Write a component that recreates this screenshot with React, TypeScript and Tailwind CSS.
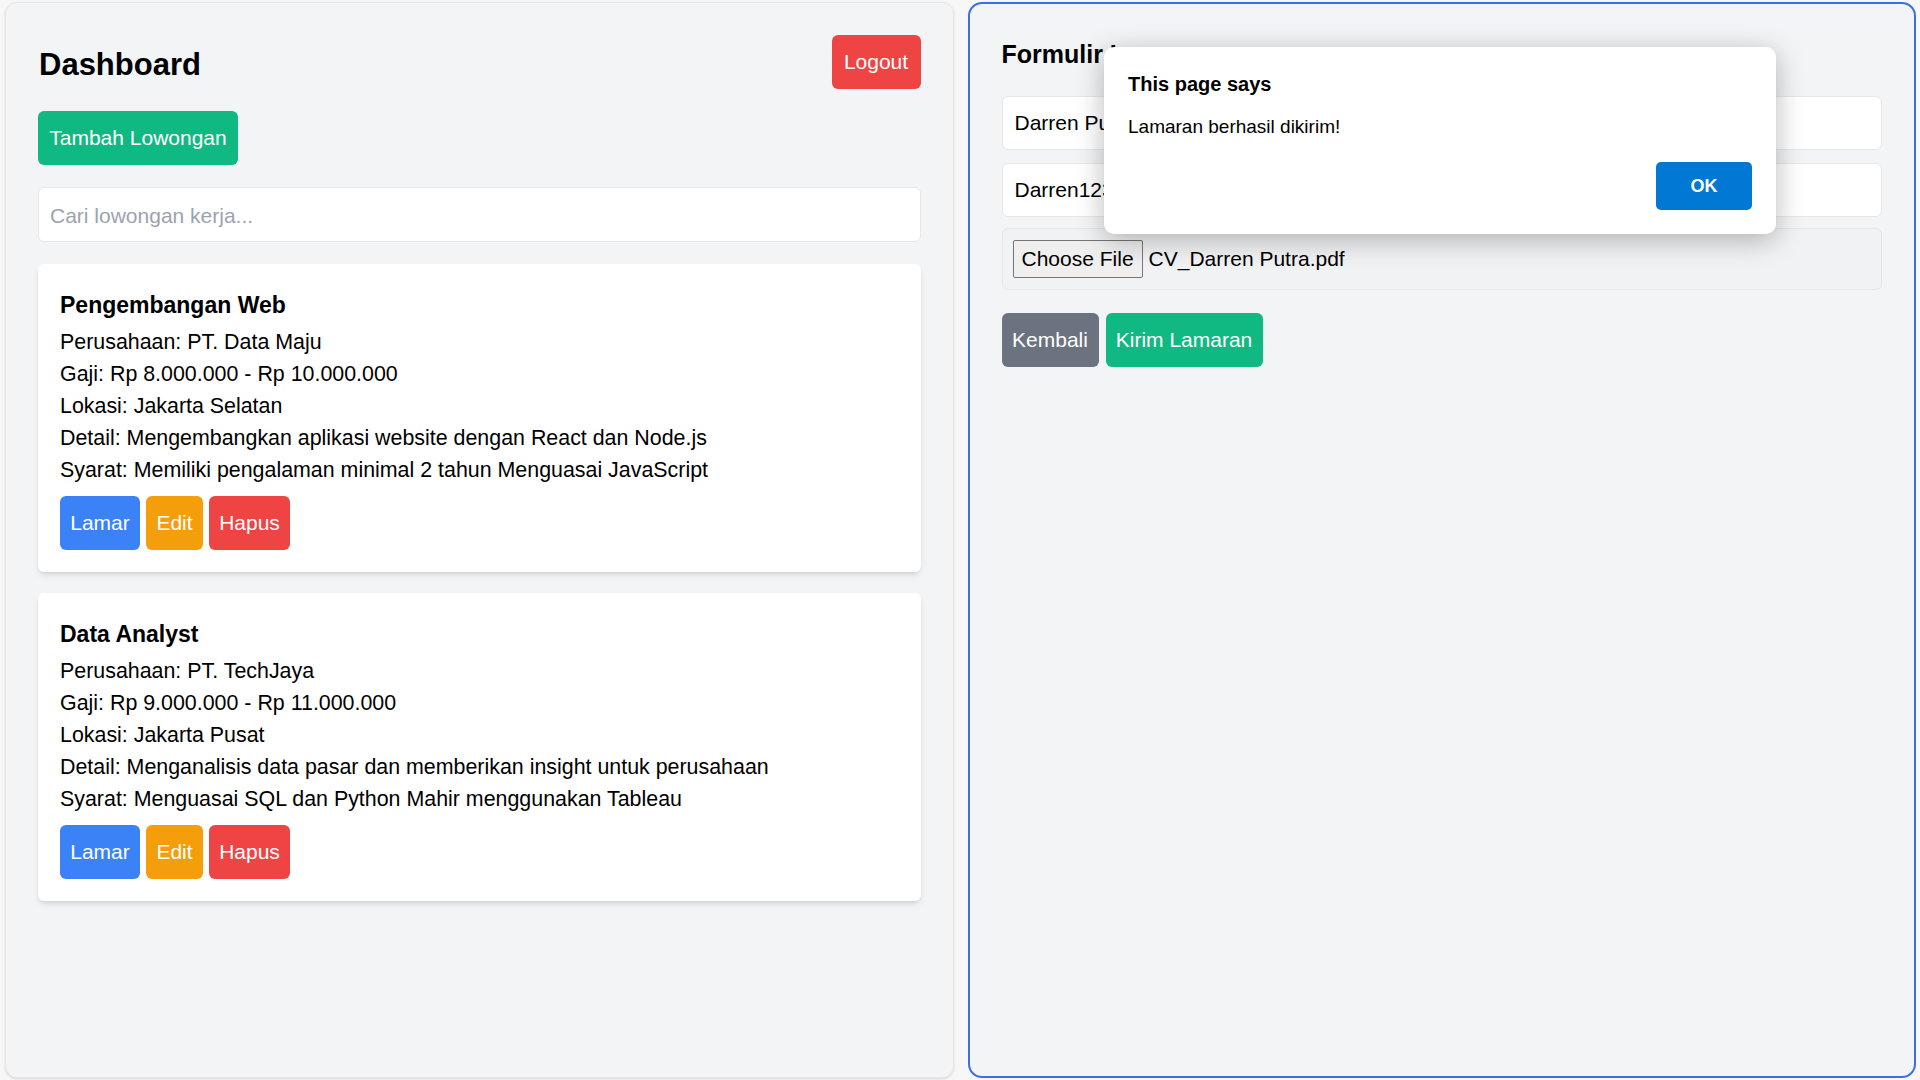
import { useState } from 'react';

type Job = {
  id: number;
  title: string;
  company: string;
  salary: string;
  location: string;
  detail: string;
  terms: string;
};

const jobs: Job[] = [
  {
    id: 1,
    title: 'Pengembangan Web',
    company: 'PT. Data Maju',
    salary: 'Rp 8.000.000 - Rp 10.000.000',
    location: 'Jakarta Selatan',
    detail: 'Mengembangkan aplikasi website dengan React dan Node.js',
    terms: 'Memiliki pengalaman minimal 2 tahun Menguasai JavaScript'
  },
  {
    id: 2,
    title: 'Data Analyst',
    company: 'PT. TechJaya',
    salary: 'Rp 9.000.000 - Rp 11.000.000',
    location: 'Jakarta Pusat',
    detail: 'Menganalisis data pasar dan memberikan insight untuk perusahaan',
    terms: 'Menguasai SQL dan Python Mahir menggunakan Tableau'
  }
];

function JobCard({ job }: { job: Job }) {
  return (
    <div className="bg-white rounded-md shadow-md pl-[22px] pr-5 pt-5 pb-[22px]">
      <h2 className="text-[23px] leading-[42px] font-semibold">{job.title}</h2>
      <div className="text-[21.4px] leading-[32px]">
        <p>Perusahaan: {job.company}</p>
        <p>Gaji: {job.salary}</p>
        <p>Lokasi: {job.location}</p>
        <p>Detail: {job.detail}</p>
        <p>Syarat: {job.terms}</p>
      </div>
      <div className="mt-[10px] flex gap-[6px]">
        <button className="h-[54px] w-[80px] rounded-md bg-[#3b82f6] text-white text-[21px]">Lamar</button>
        <button className="h-[54px] w-[57px] rounded-md bg-[#f59e0b] text-white text-[21px]">Edit</button>
        <button className="h-[54px] w-[81px] rounded-md bg-[#ef4444] text-white text-[21px]">Hapus</button>
      </div>
    </div>
  );
}

export default function App() {
  const [search, setSearch] = useState('');
  const [showAlert, setShowAlert] = useState(true);
  const filtered = jobs.filter(j => j.title.toLowerCase().includes(search.toLowerCase()));

  return (
    <div className="relative h-screen bg-[#f7f7f8] pl-[5px] pr-[4px] py-[2px] grid grid-cols-2 gap-[14px] text-black font-['Liberation_Sans',Arial,sans-serif]">
      {/* dashboard */}
      <div className="bg-[#f3f4f6] border border-[#e6e7ea] rounded-xl shadow-sm p-8 flex flex-col">
        <div className="h-[54px] flex items-center justify-between mb-[22px]">
          <h1 className="text-[31px] leading-[36px] font-bold pt-[6px] pl-[1px]">Dashboard</h1>
          <button className="h-[54px] w-[89px] rounded-md bg-[#ef4444] text-white text-[21px]">Logout</button>
        </div>
        <div className="mb-[22px]">
          <button className="h-[54px] w-[200px] rounded-md bg-[#10b981] text-white text-[21px]">Tambah Lowongan</button>
        </div>
        <input
          value={search}
          onChange={e => setSearch(e.target.value)}
          placeholder="Cari lowongan kerja..."
          className="h-[55px] w-full rounded-md border border-[#e5e7eb] bg-white pl-[11px] pr-3 pt-[3px] text-[21px] placeholder:text-[#9ca3af] outline-none mb-[22px]"
        />
        <div className="flex flex-col gap-[21px]">
          {filtered.map(j => (
            <JobCard key={j.id} job={j} />
          ))}
        </div>
      </div>

      {/* form */}
      <div className="bg-[#f3f4f6] border-2 border-[#3b6ee0] rounded-[14px] p-8">
        <h2 className="text-[25px] leading-[37px] font-bold mb-[23px]">Formulir Lamaran</h2>
        <input
          defaultValue="Darren Putra"
          className="h-[54px] w-full rounded-md border border-[#e5e7eb] bg-white px-3 text-[21px] outline-none mb-[13px]"
        />
        <input
          defaultValue="Darren123@gmail.com"
          className="h-[54px] w-full rounded-md border border-[#e5e7eb] bg-white px-3 text-[21px] outline-none mb-[11px]"
        />
        <div className="h-[62px] w-full rounded-md border border-[#e5e7eb] bg-[#f1f2f4] px-[10px] flex items-center gap-[6px] text-[21px]">
          <span className="h-[38px] px-2 flex items-center border border-[#767676] rounded-[2px] bg-[#efefef]">Choose File</span>
          <span>CV_Darren Putra.pdf</span>
        </div>
        <div className="mt-[23px] flex gap-[7px]">
          <button className="h-[54px] w-[97px] rounded-md bg-[#6b7280] text-white text-[21px]">Kembali</button>
          <button className="h-[54px] w-[157px] rounded-md bg-[#10b981] text-white text-[21px]">Kirim Lamaran</button>
        </div>
      </div>

      {/* browser alert */}
      {showAlert && (
        <div className="absolute left-[1104px] top-[47px] w-[672px] h-[187px] bg-white rounded-[10px] shadow-[0_6px_28px_rgba(0,0,0,0.28)] px-6 pt-[24px] pb-6 flex flex-col">
          <div className="text-[20px] font-bold leading-[26px]">This page says</div>
          <div className="mt-[17px] text-[19px] leading-[26px]">Lamaran berhasil dikirim!</div>
          <div className="mt-auto flex justify-end">
            <button
              onClick={() => setShowAlert(false)}
              className="h-[48px] w-[96px] rounded-[5px] bg-[#0078d4] text-white text-[18px] font-semibold"
            >
              OK
            </button>
          </div>
        </div>
      )}
    </div>
  );
}
